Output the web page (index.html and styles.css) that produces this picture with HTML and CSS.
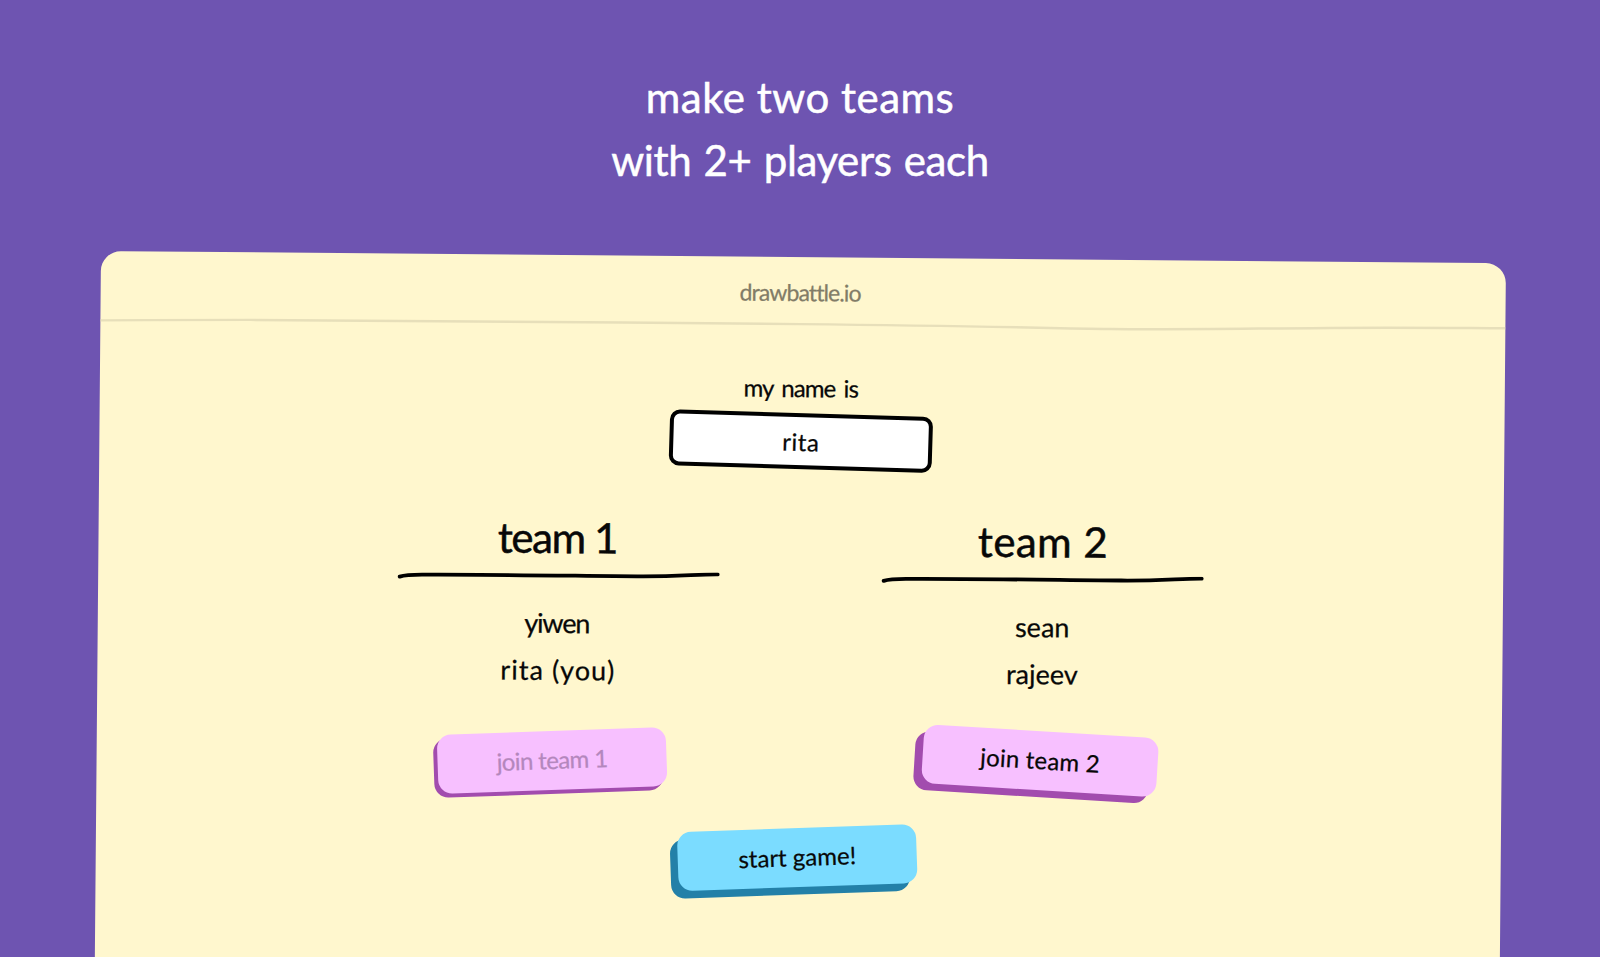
FILE: index.html
```html
<!DOCTYPE html>
<html lang="en">
<head>
    <meta charset="UTF-8">
    <meta name="viewport" content="width=device-width, initial-scale=1.0">
    <title>drawbattle.io</title>
    <link rel="stylesheet" href="styles.css">
</head>
<body>
    <div class="page">
        <h1 class="headline"><span class="headline-top">make two teams</span><br><span class="headline-bottom">with 2+ players each</span></h1>
        <div class="card">
            <div class="header">
                <span class="logo">drawbattle.io</span>
                <svg class="divider" viewBox="0 0 1405 10" preserveAspectRatio="none">
                    <path d="M0 6.4 C50 5.8 80 5 150 4.6 S500 3.7 700 4 S940 6 1010 6.2 S1150 4.4 1230 3.2 S1350 2.2 1405 2"/>
                </svg>
            </div>
            <label class="name-label" for="name">my name is</label>
            <input class="name-input" id="name" type="text" value="rita">
            <div class="teams">
                <div class="team">
                    <h2 class="team-one">team 1</h2>
                    <svg class="underline" viewBox="0 0 324 10">
                        <path d="M2.5 7 C10 4.5 18 4.8 32 4.8 C100 4 200 4.8 240 4.6 C280 4.6 300 2 320.5 2"/>
                    </svg>
                    <ul class="players">
                        <li class="yiwen">yiwen</li>
                        <li class="rita">rita (you)</li>
                    </ul>
                    <button class="button join-one" disabled>join team 1</button>
                </div>
                <div class="team">
                    <h2 class="team-two">team 2</h2>
                    <svg class="underline" viewBox="0 0 324 10">
                        <path d="M2.5 7 C10 4.5 18 4.8 32 4.8 C100 4 200 4.8 240 4.6 C280 4.6 300 2 320.5 2"/>
                    </svg>
                    <ul class="players">
                        <li class="sean">sean</li>
                        <li class="rajeev">rajeev</li>
                    </ul>
                    <button class="button join-two">join team 2</button>
                </div>
            </div>
            <button class="button start">start game!</button>
        </div>
    </div>
</body>
</html>
```
FILE: styles.css
```css
* {
    box-sizing: border-box;
}
body {
    margin: 0;
    background-color: #6e54b1;
    font-family: Lato, sans-serif;
    color: #080808;
    -webkit-text-stroke: 0.25px;
}
.page {
    height: 100vh;
    overflow: hidden;
}
.headline {
    margin: 0;
    padding-top: 66px;
    height: 250.5px;
    font-size: 42px;
    font-weight: 400;
    line-height: 63px;
    text-align: center;
    color: #fff;
    -webkit-text-stroke: 0.5px;
}
.headline-top {
    letter-spacing: 0.5px;
}
.headline-bottom {
    letter-spacing: -0.4px;
    word-spacing: 2px;
}
.card {
    display: flex;
    flex-direction: column;
    align-items: center;
    width: 1405px;
    height: 720px;
    margin-left: 101px;
    background-color: #fff7ce;
    border-radius: 20px 20px 0 0;
    transform: rotate(0.5deg);
    transform-origin: 0 0;
}
.header {
    display: flex;
    flex-direction: column;
    align-items: center;
    width: 100%;
    height: 73px;
}
.logo {
    height: 63px;
    padding: 3px 6px 0 0;
    font-size: 23px;
    line-height: 64px;
    letter-spacing: -0.9px;
    color: #827c67;
}
.divider {
    width: 100%;
    height: 10px;
    fill: none;
    stroke: #e7dfba;
    stroke-width: 2.4;
}
.name-label {
    margin-top: 43px;
    padding-right: 3px;
    font-size: 24px;
    line-height: 30px;
    letter-spacing: -0.9px;
    word-spacing: 3px;
}
.name-input {
    width: 263px;
    height: 56px;
    margin-top: 10px;
    margin-right: 3px;
    border: 4px solid #000;
    border-radius: 10px;
    background-color: #fff;
    font: 24px Lato, sans-serif;
    letter-spacing: 0.5px;
    text-align: center;
    color: #080808;
    transform: rotate(1.2deg);
}
.teams {
    display: flex;
    gap: 160px;
    margin-top: 45px;
}
.team {
    display: flex;
    flex-direction: column;
    align-items: center;
    width: 324px;
}
.team h2 {
    margin: 0;
    font-size: 42px;
    font-weight: 400;
    line-height: 50px;
    -webkit-text-stroke: 0.5px;
}
.team .team-one {
    padding-right: 3px;
    letter-spacing: -1.4px;
}
.team-two {
    letter-spacing: 0.4px;
}
.underline {
    width: 324px;
    height: 10px;
    margin-top: 9px;
    fill: none;
    stroke: #000;
    stroke-width: 3.8;
    stroke-linecap: round;
}
.players {
    margin: 18px 0 38px;
    padding: 0;
    list-style: none;
    font-size: 27px;
    line-height: 47px;
    text-align: center;
}
.yiwen {
    padding-right: 3px;
    letter-spacing: -1.2px;
}
.rita {
    letter-spacing: 1.1px;
}
.button {
    height: 59px;
    padding: 0 0 2px;
    border: none;
    border-radius: 14px;
    font: 24px Lato, sans-serif;
    color: #080808;
    cursor: pointer;
}
.join-one {
    width: 229px;
    background-color: #f7c0ff;
    box-shadow: -4px 4px #a24cae;
    letter-spacing: -0.6px;
    color: #b487bd;
    transform: translate(-5px, 0) rotate(-2.5deg);
}
.join-two {
    width: 235px;
    background-color: #f7c0ff;
    box-shadow: -8px 7px #a24cae;
    letter-spacing: 0.2px;
    transform: translate(-1px, -4px) rotate(3deg);
}
.start {
    width: 239px;
    margin-top: 36px;
    background-color: #7bdcff;
    box-shadow: -7.5px 7.5px #2380a8;
    transform: translate(-1px, 0) rotate(-2.5deg);
}
```
